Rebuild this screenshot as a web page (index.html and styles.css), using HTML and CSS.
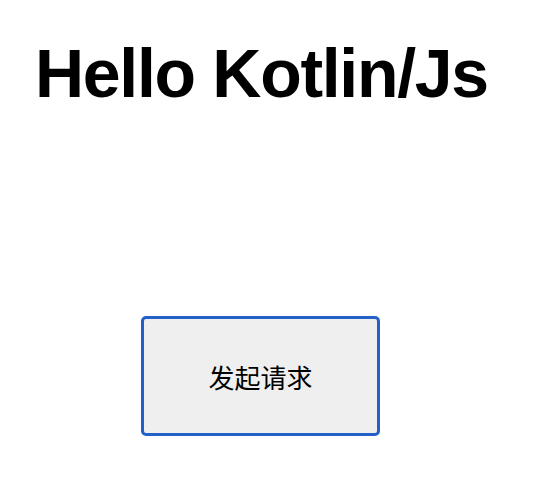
FILE: index.html
```html
<!DOCTYPE html>
<html>
<head>
<meta charset="utf-8">
<link rel="stylesheet" href="styles.css">
</head>
<body>
<main class="page">
  <h1 class="title">Hello Kotlin/Js</h1>
  <button class="req-btn">发起请求</button>
</main>
</body>
</html>
```
FILE: styles.css
```css
html, body {
  margin: 0;
  padding: 0;
  background: #ffffff;
}
.page {
  padding: 33px 0 0 35px;
  display: flex;
  flex-direction: column;
  align-items: flex-start;
}
.title {
  margin: 0;
  font-family: "Liberation Sans", Arial, sans-serif;
  font-weight: bold;
  font-size: 68px;
  line-height: 80px;
  letter-spacing: -1.3px;
  color: #000;
}
.req-btn {
  margin: 203px 0 0 106px;
  width: 239px;
  height: 120px;
  box-sizing: border-box;
  border: 3px solid #2361c9;
  border-radius: 5px;
  background: #efefef;
  font-family: "Noto Sans CJK SC", sans-serif;
  font-size: 26px;
  color: #000;
  padding: 0;
}
```
